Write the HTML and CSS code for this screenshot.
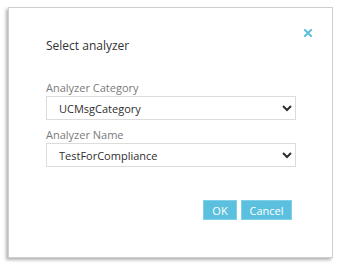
FILE: index.html
```html
<!DOCTYPE html>
<html lang="en">
<head>
  <meta charset="UTF-8" />
  <meta name="viewport" content="width=device-width, initial-scale=1.0" />
  <title>Select analyzer</title>
  <link rel="stylesheet" href="styles.css">
</head>
<body>
  <div class="dialog">
    <!-- Close -->
    <button class="close" type="button" aria-label="Close">
      <svg width="8" height="8" viewBox="0 0 8 8">
        <path d="M1 1 L7 7 M7 1 L1 7" stroke="#5bc0de" stroke-width="2" stroke-linecap="square" />
      </svg>
    </button>

    <div class="dialog-body">
      <h1 class="title">Select analyzer</h1>

      <div class="fields">
        <div class="field">
          <label class="field-label" for="category">Analyzer Category</label>
          <select id="category" class="field-select">
            <option>UCMsgCategory</option>
          </select>
        </div>

        <div class="field">
          <label class="field-label" for="name">Analyzer Name</label>
          <select id="name" class="field-select">
            <option>TestForCompliance</option>
          </select>
        </div>
      </div>

      <div class="actions">
        <button class="btn btn-ok" type="button">OK</button>
        <button class="btn btn-cancel" type="button">Cancel</button>
      </div>
    </div>
  </div>
</body>
</html>
```

FILE: styles.css
```css
* {
  box-sizing: border-box;
  font-family: 'Open Sans', 'DejaVu Sans', sans-serif;
}

html, body {
  margin: 0;
  padding: 0;
  background-color: #ffffff;
}

body {
  padding: 7px 8px 8px 8px;
}

.dialog {
  position: relative;
  width: 325px;
  height: 251px;
  background-color: #ffffff;
  border: 1px solid #cfcfcf;
  box-shadow: -2px 2px 3px rgba(0, 0, 0, 0.3);
}

.close {
  position: absolute;
  top: 21px;
  right: 20px;
  width: 8px;
  height: 8px;
  padding: 0;
  border: none;
  background: none;
  display: flex;
  cursor: pointer;
}

.dialog-body {
  padding: 30px 36px 0 37px;
  display: flex;
  flex-direction: column;
}

.title {
  margin: 0;
  font-size: 12px;
  line-height: 16px;
  font-weight: 400;
  color: #333333;
}

.fields {
  margin-top: 26px;
  display: flex;
  flex-direction: column;
  gap: 7px;
}

.field {
  display: flex;
  flex-direction: column;
  gap: 1px;
}

.field-label {
  font-size: 11px;
  line-height: 15px;
  color: #7a7a7a;
}

.field-select {
  width: 250px;
  height: 24px;
  margin: 0;
  padding: 0 0 0 8px;
  font-size: 11px;
  color: #2f2f2f;
  background-color: #ffffff;
  border: 1px solid #dcdcdc;
  border-radius: 0;
}

.actions {
  margin-top: 33px;
  padding-right: 4px;
  display: flex;
  justify-content: flex-end;
  gap: 4px;
}

.btn {
  height: 20px;
  padding: 0;
  font-size: 11px;
  color: #ffffff;
  background-color: #5bc0de;
  border: 1px solid #7fd0e8;
  border-radius: 0;
  cursor: pointer;
}

.btn-ok {
  width: 34px;
}

.btn-cancel {
  width: 51px;
}
```
